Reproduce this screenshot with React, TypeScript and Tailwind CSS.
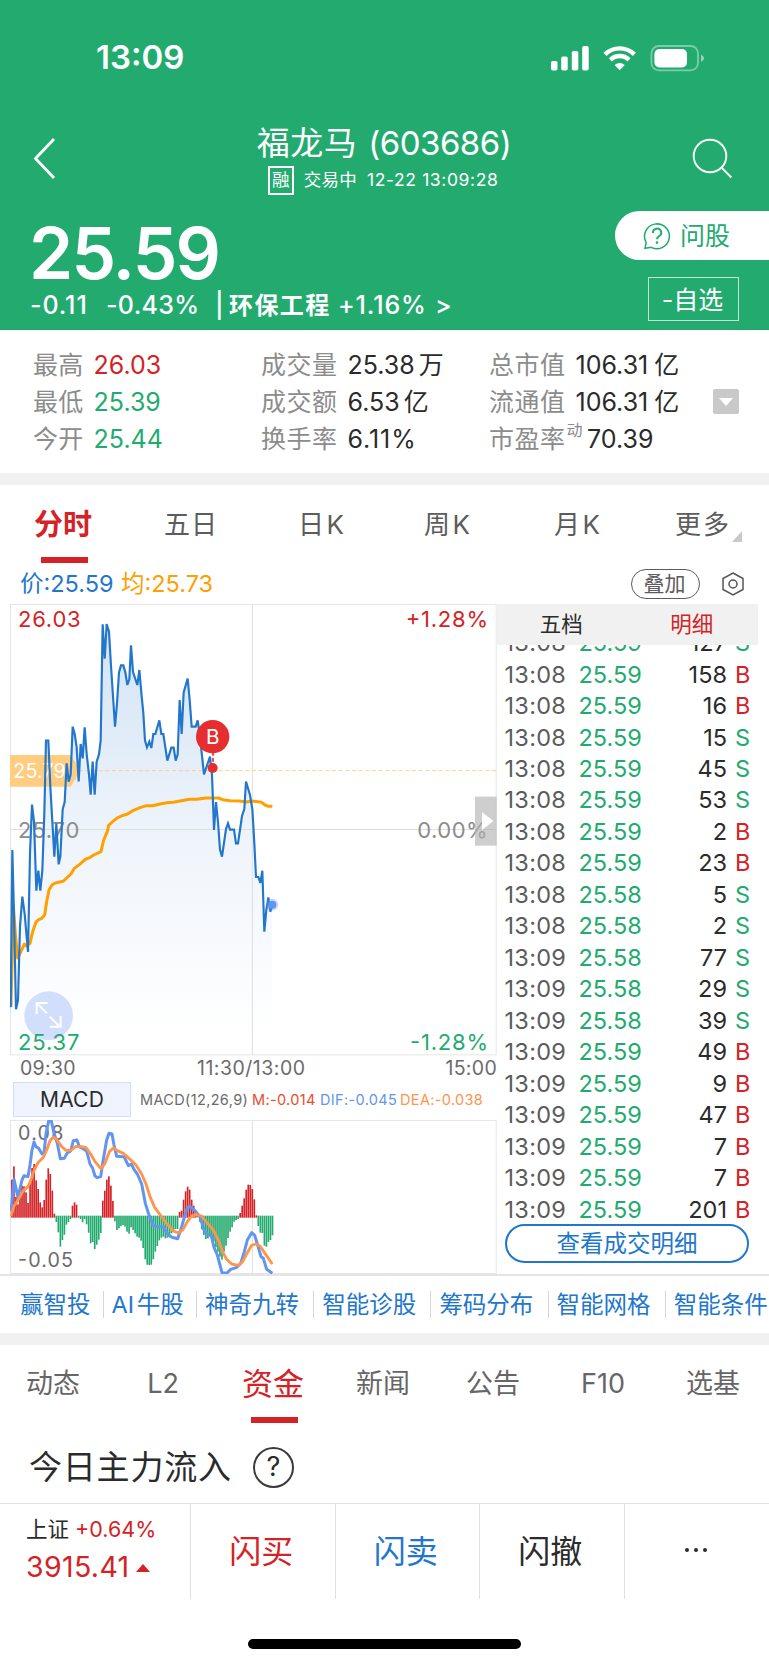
import type { ReactNode } from 'react';

type Side = 'B' | 'S';

const trades: [string, string, number, Side][] = [
  ['13:08', '25.59', 127, 'S'],
  ['13:08', '25.59', 158, 'B'],
  ['13:08', '25.59', 16, 'B'],
  ['13:08', '25.59', 15, 'S'],
  ['13:08', '25.59', 45, 'S'],
  ['13:08', '25.59', 53, 'S'],
  ['13:08', '25.59', 2, 'B'],
  ['13:08', '25.59', 23, 'B'],
  ['13:08', '25.58', 5, 'S'],
  ['13:08', '25.58', 2, 'S'],
  ['13:09', '25.58', 77, 'S'],
  ['13:09', '25.58', 29, 'S'],
  ['13:09', '25.58', 39, 'S'],
  ['13:09', '25.59', 49, 'B'],
  ['13:09', '25.59', 9, 'B'],
  ['13:09', '25.59', 47, 'B'],
  ['13:09', '25.59', 7, 'B'],
  ['13:09', '25.59', 7, 'B'],
  ['13:09', '25.59', 201, 'B'],
];

const pricePoints =
  '32,1222 37,750 41,905 48,1228 54,1200 60,980 67,890 74,942 84,1056 90,760 96,614 102,665 109,872 115,812 121,872 127,812 133,640 138,422 145,422 151,560 157,665 163,770 169,670 176,793 181,770 188,628 194,606 200,490 206,545 212,523 218,380 224,402 230,442 236,544 242,432 248,475 254,382 260,462 267,524 272,584 278,485 284,584 290,485 297,463 302,422 308,73 314,176 320,72 327,95 333,198 345,380 351,310 357,217 363,196 370,196 376,217 382,255 388,238 393,136 399,216 412,255 418,210 424,278 430,340 435,422 441,442 448,425 454,444 460,402 466,402 478,361 484,402 490,402 502,482 514,443 521,443 527,482 533,464 539,300 545,402 551,277 563,236 569,300 575,380 587,380 593,361 599,402 612,523 630,470 636,524 642,690 648,606 654,666 660,749 666,770 678,687 684,670 690,689 702,689 708,730 714,730 726,648 733,627 738,545 750,585 757,627 763,730 768,831 775,831 781,849 787,812 793,995 799,930 805,892 811,935 817,914';

const avgPoints =
  '33,1220 40,915 46,1000 53,1074 66,1048 73,1032 79,1038 90,1030 98,995 108,966 116,959 124,956 134,945 140,905 147,870 156,855 166,849 189,844 200,834 213,822 222,806 238,794 256,778 271,772 281,765 303,755 311,720 322,695 326,676 340,663 353,653 367,647 383,642 400,631 420,623 440,617 458,617 480,612 500,608 520,607 540,603 568,598 590,598 618,594 655,594 668,599 690,602 718,603 740,606 755,603 785,607 795,615 805,619 817,619';

const difPoints =
  '33,485 42,388 54,442 66,390 72,377 84,380 90,345 96,300 102,276 108,290 116,295 126,312 132,310 138,250 146,213 154,213 162,250 172,280 181,326 193,325 201,310 212,303 220,272 231,270 238,290 250,297 260,303 270,342 278,355 285,378 292,383 302,380 308,340 320,270 327,250 336,252 342,285 350,319 372,320 385,347 394,342 403,360 412,372 425,402 436,460 446,492 460,527 475,530 490,530 505,555 516,562 533,566 545,530 560,478 568,468 585,482 600,500 612,540 622,552 634,558 642,592 652,615 666,668 680,670 692,658 710,652 722,640 733,605 742,570 755,548 764,556 773,585 783,620 790,625 800,658 817,670';

const deaPoints =
  '33,498 42,468 54,450 70,422 84,410 92,392 102,362 114,338 130,322 140,300 150,272 160,262 170,268 185,290 198,301 212,301 228,289 245,290 258,293 272,312 285,335 303,356 315,340 328,305 340,294 352,302 370,310 390,328 408,345 425,372 438,402 450,440 464,472 480,494 500,520 520,543 535,549 548,540 562,515 575,498 592,494 604,498 618,514 640,540 655,570 668,606 680,628 695,642 715,646 728,635 742,608 755,586 768,582 780,588 795,610 817,642';

// histogram of M, one entry per minute; positive is drawn above the zero line
const macdBars = [
  112, 152, 60, 38, 70, 94, 92, 74, 42, 100, 147, 159, 110, 84, 44, 29, 51, 112, 146, 129, 79, 10,
  -17, -48, -91, -71, -55, -25, -17, -8, 34, 44, 37, -4, -8, -18, -8, -24, -49, -81, -77, -98, -85,
  -70, -50, 49, 79, 112, 122, 94, 48, -15, -41, -36, -29, -26, -31, -46, -52, -33, -41, -51, -61,
  -64, -73, -95, -129, -145, -146, -145, -129, -106, -89, -72, -64, -61, -66, -64, -58, -51, -46,
  -38, -38, 15, 19, 52, 77, 91, 82, 52, 34, 10, -3, -16, -39, -56, -68, -66, -61, -59, -76, -93,
  -106, -121, -130, -106, -88, -65, -46, -33, -16, -11, -8, 12, 34, 56, 82, 97, 96, 84, 53, 5, -29,
  -49, -50, -88, -91, -77, -71, -57,
];

function StatusIcons() {
  return (
    <svg width="156" height="30" viewBox="550 42 156 30" fill="#fff">
      <rect x="551" y="60" width="6.5" height="9.5" rx="1.8" />
      <rect x="561.2" y="55.5" width="6.5" height="14" rx="1.8" />
      <rect x="571.8" y="50" width="6.5" height="19.5" rx="1.8" />
      <rect x="582.2" y="45" width="6.5" height="24.5" rx="1.8" />
      <g fill="none" stroke="#fff" strokeWidth="4.4">
        <path d="M605 53.4 A21 21 0 0 1 634.4 53.4" />
        <path d="M610.4 58.9 A13.2 13.2 0 0 1 629 58.9" />
      </g>
      <path d="M614.6 64 Q619.7 60 624.8 64 L619.7 69.3 Z" />
      <rect x="651.4" y="45" width="46.6" height="24.4" rx="7.5" fill="none" stroke="#fff" strokeOpacity="0.4" strokeWidth="1.8" />
      <rect x="654.4" y="48" width="32.6" height="18.4" rx="5" />
      <path d="M701 53.6 Q704 55 704 57.3 Q704 59.6 701 61 Z" fillOpacity="0.5" />
    </svg>
  );
}

function Header() {
  return (
    <header className="h-[330px] bg-[#23ab6f] text-white">
      <div className="flex h-[115px] items-center justify-between pl-24 pr-[63px]">
        <span className="text-[33px] font-semibold">13:09</span>
        <StatusIcons />
      </div>

      <div className="flex h-[90px] items-center justify-between pl-[31px] pr-[37px]">
        <svg className="-mt-[2px] w-[42px]" height="44" viewBox="0 0 42 44" fill="none" stroke="#fff" strokeWidth="2.8">
          <path d="M23 2 L4.5 21.5 L23 41" />
        </svg>
        <div className="flex flex-col items-center pl-[3px] pt-px">
          <div className="h-[39px] pl-[2px] text-[33px] leading-[38px]">
            <span className="tracking-[0.5px]">福龙马</span>
            <span className="ml-[11px] tracking-[-0.5px]">(603686)</span>
          </div>
          <div className="flex h-[34px] items-center text-[17.5px]">
            <span className="flex h-[29px] w-[26px] items-center justify-center border-2 border-white">融</span>
            <span className="ml-[10px] tracking-[0.3px]">交易中</span>
            <span className="ml-[10px] tracking-[0.6px]">12-22 13:09:28</span>
          </div>
        </div>
        <svg className="-mt-[2px]" width="42" height="42" viewBox="690 138 42 42" fill="none" stroke="#fff" strokeWidth="1.9">
          <circle cx="710" cy="156" r="16.3" />
          <path d="M721.8 167.8 L731.3 177.5" />
        </svg>
      </div>

      <div className="flex justify-between">
        <div className="pl-[29px] pt-3">
          <div className="h-[73px] text-[71px] font-semibold leading-[72px] tracking-[-1.8px]">25.59</div>
          <div className="flex h-8 items-center whitespace-nowrap pl-px text-[25px] font-medium">
            <span className="w-[76px] tracking-[0.9px]">-0.11</span>
            <span className="w-[109px] tracking-[0.3px]">-0.43%</span>
            <span className="w-[14px]">|</span>
            <span className="w-[109px] text-2xl font-bold tracking-[1.4px]">环保工程</span>
            <span className="w-[97px] tracking-[0.9px]">+1.16%</span>
            <span>&gt;</span>
          </div>
        </div>
        <div className="flex flex-col pt-[6px]">
          <button className="flex h-[49px] w-[154px] items-center rounded-l-full bg-white pl-[28px] text-[#23ab6f]">
            <svg width="28" height="28" viewBox="0 0 28 28" fill="none" stroke="currentColor" strokeWidth="1.5">
              <path d="M2 26.3 L3.2 20.5 A12.4 12.4 0 1 1 8.2 25.3 Z" />
              <path d="M10 11 A4.1 4.1 0 1 1 15.8 14.4 Q14 15.5 14 17.3" strokeWidth="2" />
              <circle cx="14" cy="20.6" r="0.6" />
            </svg>
            <span className="ml-[9px] pt-[2px] text-[25px]">问股</span>
          </button>
          <button className="ml-[33px] mt-[17px] flex h-[44px] w-[91px] items-center justify-center border-[1.5px] border-white/70 pr-[2px] pt-[3px] text-[25px]">
            -自选
          </button>
        </div>
      </div>
    </header>
  );
}

function Stat({ label, color, children }: { label: ReactNode; color?: string; children: ReactNode }) {
  return (
    <div className="flex items-center whitespace-nowrap text-[25px]">
      <span className="text-[#8c8c8c]">{label}</span>
      <span className={color ?? 'text-[#2b2b2b]'}>{children}</span>
    </div>
  );
}

function Stats() {
  return (
    <section className="flex h-[143px] items-start pl-[33px] pt-[17px]">
      <div className="grid w-[228px] auto-rows-[37px]">
        <Stat label={<span className="mr-[10px] tracking-[0.3px]">最高</span>} color="text-[#d42226]">26.03</Stat>
        <Stat label={<span className="mr-[10px] tracking-[0.3px]">最低</span>} color="text-[#23ab6f]">25.39</Stat>
        <Stat label={<span className="mr-[10px] tracking-[0.3px]">今开</span>} color="text-[#23ab6f]">25.44</Stat>
      </div>
      <div className="grid w-[228px] auto-rows-[37px]">
        <Stat label={<span className="mr-[10px] tracking-[0.5px]">成交量</span>}>25.38<span className="ml-1">万</span></Stat>
        <Stat label={<span className="mr-[10px] tracking-[0.5px]">成交额</span>}>6.53<span className="ml-1">亿</span></Stat>
        <Stat label={<span className="mr-[10px] tracking-[0.5px]">换手率</span>}><span className="tracking-[0.9px]">6.11%</span></Stat>
      </div>
      <div className="grid w-[224px] auto-rows-[37px]">
        <Stat label={<span className="mr-[10px] tracking-[0.5px]">总市值</span>}>106.31<span className="ml-[6px]">亿</span></Stat>
        <Stat label={<span className="mr-[10px] tracking-[0.5px]">流通值</span>}>106.31<span className="ml-[6px]">亿</span></Stat>
        <Stat
          label={
            <span className="mr-1 flex tracking-[0.5px]">
              市盈率<span className="-mt-[3px] ml-[1px] text-[16px]">动</span>
            </span>
          }
        >
          70.39
        </Stat>
      </div>
      <button className="mt-[42px] flex h-[25px] w-[26px] items-center justify-center rounded-[2px] bg-[#c9c9c9]">
        <svg width="14" height="8" viewBox="0 0 14 8" fill="#fff"><path d="M0 0h14L7 8z" /></svg>
      </button>
    </section>
  );
}

function PeriodTabs() {
  return (
    <nav className="flex h-[78px] items-center whitespace-nowrap pl-[34px] text-[26px] text-[#5c5c5c]">
      <div className="relative w-[130px] pt-px text-[29px] font-bold text-[#d42226]">
        分时
        <span className="absolute -bottom-[17px] left-[7px] h-[6px] w-[47px] bg-[#d42226]" />
      </div>
      <span className="w-[134px] tracking-[1px]">五日</span>
      <span className="w-[126px] tracking-[2.5px]">日K</span>
      <span className="w-[130px] tracking-[2.5px]">周K</span>
      <span className="w-[121px] tracking-[2.5px]">月K</span>
      <span className="tracking-[2px]">更多</span>
      <svg className="ml-px mt-[24px]" width="10" height="11" viewBox="0 0 10 11" fill="#c9c9c9"><path d="M10 0v11H0z" /></svg>
    </nav>
  );
}

// plot space is three units per pixel
function PriceChart() {
  return (
    <svg className="block" width="488" height="452" viewBox="30 12 1464 1356">
      <defs>
        <linearGradient id="area" x1="0" y1="0" x2="0" y2="1">
          <stop offset="0" stopColor="#d3e3f5" />
          <stop offset="0.55" stopColor="#f0f5fb" />
          <stop offset="1" stopColor="#ffffff" />
        </linearGradient>
      </defs>
      <polygon points={`${pricePoints} 817,1300 32,1300`} fill="url(#area)" />
      <g stroke="#dedede" strokeWidth="3" fill="none">
        <rect x="31.5" y="13.5" width="1457" height="1351" stroke="#e6e6e6" />
        <path d="M757 13V1365M31 688.5H1488" />
      </g>
      <path d="M30 465H212L242 512L212 560H30Z" fill="#ffcc80" />
      <path d="M236 512H1488" stroke="#ffcf8a" strokeWidth="3" strokeDasharray="12 8" />
      <g className="font-[Inter]" fontSize="66">
        <text x="54" y="80" fill="#d42226" textLength="188">26.03</text>
        <text x="1217" y="80" fill="#d42226" textLength="247">+1.28%</text>
        <text x="40" y="534" fontSize="59" fill="#fff" textLength="157">25.79</text>
        <text x="54" y="714" fill="#8c8c8c" textLength="184">25.70</text>
        <text x="1252" y="714" fill="#8c8c8c" textLength="211">0.00%</text>
        <text x="1230" y="1350" fill="#23ab6f" textLength="234">-1.28%</text>
      </g>
      <polyline points={avgPoints} fill="none" stroke="#ffa000" strokeWidth="9" strokeLinejoin="round" />
      <polyline points={pricePoints} fill="none" stroke="#2277cc" strokeWidth="6.5" />
      <circle cx="146" cy="1247" r="73" fill="#cddcfd" fillOpacity="0.92" />
      <g stroke="#fff" strokeWidth="6" fill="none">
        <path d="M110 1242V1209H143M112 1211L141 1240M149 1250L180 1280M182 1248V1280H149" />
      </g>
      <text className="font-[Inter]" fontSize="66" x="54" y="1350" fill="#23ab6f" textLength="184">25.37</text>
      <path d="M639 455V500" stroke="#e62e30" strokeWidth="5" strokeDasharray="12 6" />
      <circle cx="638" cy="504" r="15" fill="#e62e30" />
      <circle cx="638" cy="410" r="50" fill="#e62e30" />
      <text className="font-[Inter]" fontSize="62" x="638" y="432" fill="#fff" textAnchor="middle">B</text>
      <circle cx="817" cy="914" r="18" fill="#6294f0" fillOpacity="0.35" />
      <circle cx="817" cy="914" r="12" fill="#6294f0" />
      <rect x="1425" y="590" width="65" height="147" fill="#b0b0b0" fillOpacity="0.62" />
      <path d="M1446 636L1480 663L1446 690Z" fill="#fff" />
    </svg>
  );
}

function MacdChart() {
  return (
    <svg className="block" width="488" height="154" viewBox="30 210 1464 462">
      <g stroke="#e6e6e6" strokeWidth="3" fill="none">
        <rect x="31.5" y="211.5" width="1457" height="459" />
        <path d="M757 211V671" stroke="#dedede" />
      </g>
      <g className="font-[Inter]" fontSize="59" fill="#6b6b6b">
        <text x="54" y="271" textLength="136">0.08</text>
        <text x="54" y="651" textLength="165">-0.05</text>
      </g>
      {macdBars.map((v, i) => (
        <rect
          key={i}
          x={33.2 + i * 6.06}
          y={v > 0 ? 501 - v : 497}
          width="5"
          height={Math.abs(v) + 2}
          fill={v > 0 ? '#d42226' : '#23ab6f'}
        />
      ))}
      <polyline points={difPoints} fill="none" stroke="#6294f0" strokeWidth="9" strokeLinejoin="round" />
      <polyline points={deaPoints} fill="none" stroke="#ff944d" strokeWidth="8.5" strokeLinejoin="round" />
    </svg>
  );
}

function TradeList() {
  return (
    <aside className="w-[261px]">
      <div className="grid h-[41px] grid-cols-2 items-center bg-[#f1f1f1] pb-px text-center text-[21.5px]">
        <span className="pr-[2px] text-[#2b2b2b]">五档</span>
        <span className="pr-[2px] text-[#d42226]">明细</span>
      </div>
      <div className="h-[578px] overflow-hidden">
        <div className="-mt-[18px]">
          {trades.map(([time, price, qty, side], i) => (
            <div key={i} className="flex h-[31.47px] items-center pl-[7.5px] pr-2 text-[23.5px]">
              <span className="w-[74px] tracking-[0.3px] text-[#5c5c5c]">{time}</span>
              <span className="text-[#23ab6f]">{price}</span>
              <span className="ml-auto text-[#2b2b2b]">{qty}</span>
              <span className={`w-[23px] pl-[8px] ${side === 'B' ? 'text-[#d42226]' : 'text-[#23ab6f]'}`}>{side}</span>
            </div>
          ))}
        </div>
      </div>
      <button className="ml-2 mt-px flex h-[39px] w-[244px] items-center justify-center rounded-full border-2 border-[#2277cc] text-[23.5px] text-[#2277cc]">
        查看成交明细
      </button>
    </aside>
  );
}

const links = ['赢智投', 'AI 牛股', '神奇九转', '智能诊股', '筹码分布', '智能网格', '智能条件'];

function Chart() {
  return (
    <section>
      <div className="flex h-[41px] items-center whitespace-nowrap pl-5 pr-[25px] text-[23.5px]">
        <span className="w-[101px] text-[#2277cc]">价:25.59</span>
        <span className="text-[#ffa000]">均:25.73</span>
        <span className="ml-auto flex h-[30px] w-[69px] items-center justify-center rounded-full border-[1.5px] border-[#5c5c5c] pr-[2px] text-[21px] text-[#5c5c5c]">
          叠加
        </span>
        <svg className="ml-[22px]" width="22" height="24" viewBox="0 0 22 24" fill="none" stroke="#555" strokeWidth="1.5">
          <path d="M11 1L21 6.5V17.5L11 23L1 17.5V6.5Z" />
          <circle cx="11" cy="12" r="4" />
        </svg>
      </div>
      <div className="flex h-[672px] border-b-2 border-[#e4e4e4] pl-[10px]">
        <div className="w-[487px]">
          <PriceChart />
          <div className="flex h-[26px] items-center pl-[10px] text-[19.5px] leading-none tracking-[0.3px] text-[#6b6b6b]">
            <span className="w-[177px]">09:30</span>
            <span className="tracking-[0.5px]">11:30/13:00</span>
            <span className="ml-auto">15:00</span>
          </div>
          <div className="flex h-[38px] items-center whitespace-nowrap pb-[3px] text-[14.5px] tracking-[0.35px]">
            <span className="ml-[3px] flex h-[35px] w-[118px] items-center justify-center border border-[#cfdefc] bg-[#f0f4ff] text-[21px] tracking-[0.2px] text-[#2b2b2b]">
              MACD
            </span>
            <span className="ml-[9px] w-[112px] text-[#6b6b6b]">MACD(12,26,9)</span>
            <span className="w-[68px] text-[#ec4b2b]">M:-0.014</span>
            <span className="w-[80px] text-[#6294f0]">DIF:-0.045</span>
            <span className="text-[#ff944d]">DEA:-0.038</span>
          </div>
          <MacdChart />
        </div>
        <TradeList />
      </div>
      <div className="flex h-[57px] items-center overflow-hidden whitespace-nowrap pl-[9px] text-[23.5px] text-[#2277cc]">
        {links.map((l, i) => (
          <span
            key={l}
            className={`shrink-0 leading-[27px] ${i > 0 ? 'border-l border-[#d5d5d5] pl-2' : 'pl-[11px]'} ${l.length > 4 || i === 0 ? 'w-[93.5px]' : 'w-[117.2px]'} ${i === 1 ? '[word-spacing:-4px]' : ''}`}
          >
            {l}
          </span>
        ))}
      </div>
    </section>
  );
}

function InfoTabs() {
  return (
    <nav className="-ml-[2px] flex h-[84px] items-center whitespace-nowrap pb-[6px] text-[27px] text-[#666]">
      {['动态', 'L2', '资金', '新闻', '公告', 'F10', '选基'].map((t) =>
        t === '资金' ? (
          <div key={t} className="relative w-[110px] text-center text-[31px] text-[#d42226]">
            {t}
            <span className="absolute -bottom-[16px] left-[33px] h-[6px] w-[47px] bg-[#d42226]" />
          </div>
        ) : (
          <span key={t} className="w-[110px] text-center">{t}</span>
        ),
      )}
    </nav>
  );
}

function BottomBar() {
  return (
    <footer className="flex h-[96px] border-t-[1.5px] border-[#e0e0e0] text-[32px]">
      <div className="flex w-[191px] flex-col border-r border-[#e0e0e0] pl-[26px] pt-2">
        <div className="flex h-[35px] items-center text-[21.5px] text-[#2b2b2b]">
          上证<span className="ml-[6px] text-[#d42226]">+0.64%</span>
        </div>
        <div className="flex h-[41px] items-center text-[28.5px] tracking-[0.35px] text-[#d42226]">
          3915.41
          <svg className="ml-[6px]" width="14" height="8" viewBox="0 0 14 8" fill="currentColor"><path d="M7 0L14 8H0z" /></svg>
        </div>
      </div>
      <button className="w-[144.5px] border-r border-[#e0e0e0] pr-[3px] text-[#d42226]">闪买</button>
      <button className="w-[144.5px] border-r border-[#e0e0e0] pr-[3px] text-[#2277cc]">闪卖</button>
      <button className="w-[144.5px] border-r border-[#e0e0e0] pr-[3px] text-[#2b2b2b]">闪撤</button>
      <button className="flex flex-1 items-center justify-center gap-[5px] pb-[3px] pr-[2px]">
        <span className="size-1 rounded-full bg-[#2b2b2b]" />
        <span className="size-1 rounded-full bg-[#2b2b2b]" />
        <span className="size-1 rounded-full bg-[#2b2b2b]" />
      </button>
    </footer>
  );
}

export default function App() {
  return (
    <div className="h-[1665px] w-[769px] overflow-hidden bg-white font-[Inter,'Noto_Sans_CJK_SC',sans-serif]">
      <Header />
      <Stats />
      <div className="h-3 bg-[#f1f1f1]" />
      <PeriodTabs />
      <Chart />
      <div className="h-3 bg-[#f1f1f1]" />
      <InfoTabs />
      <div className="flex h-[74px] items-center pl-[29px] pt-[3px] text-[33px] text-[#2b2b2b]">
        <span className="pt-px tracking-[0.8px]">今日主力流入</span>
        <span className="ml-[21px] flex size-[41px] items-center justify-center rounded-full border-2 border-[#3a3a3a] text-[27px]">?</span>
      </div>
      <BottomBar />
      <div className="flex justify-center pt-[40px]">
        <div className="h-[10px] w-[273px] rounded-full bg-black" />
      </div>
    </div>
  );
}
